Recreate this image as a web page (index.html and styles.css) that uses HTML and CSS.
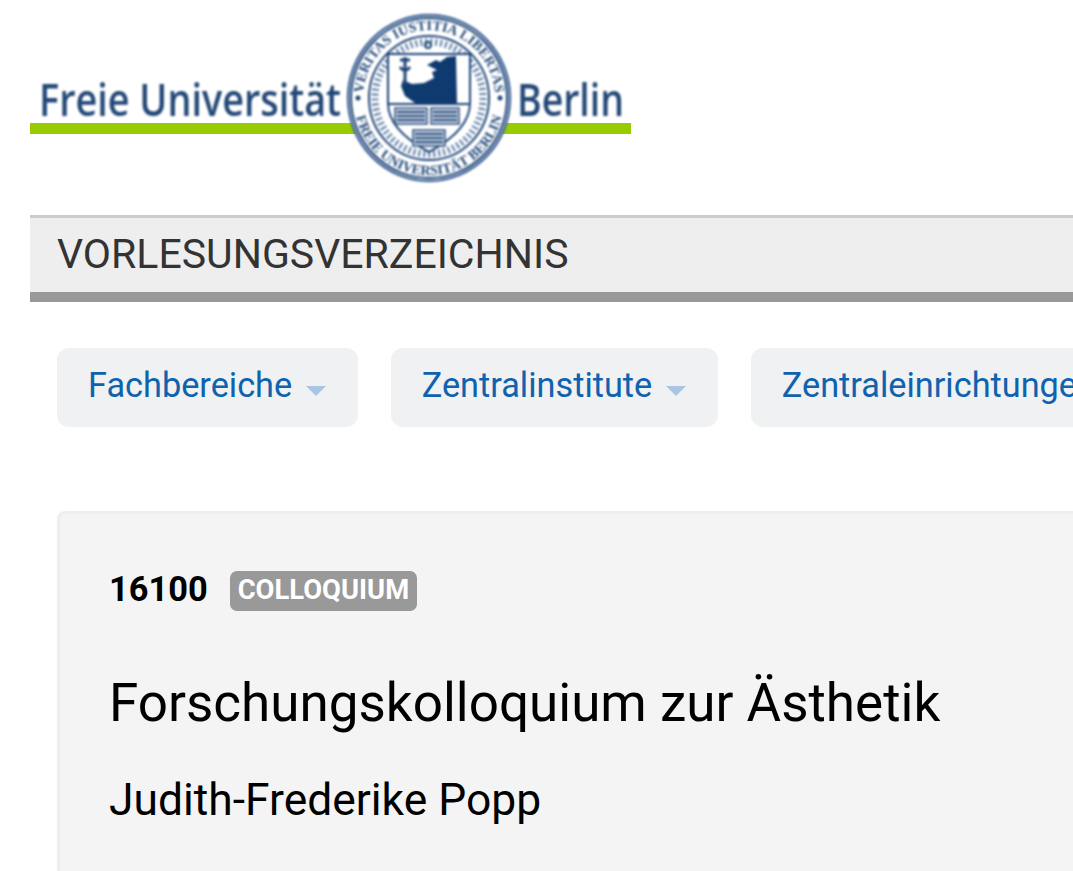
FILE: index.html
```html
<!DOCTYPE html>
<html lang="en">
<head>
  <meta charset="UTF-8">
  <meta name="viewport" content="width=device-width, initial-scale=1.0">
  <title>Vorlesungsverzeichnis</title>
  <link rel="stylesheet" href="styles.css">
</head>
<body>
  <header class="logo">
    <svg class="logo-img" viewBox="30 0 601 190" width="601" height="190">
      <defs>
        <path id="sealTop" d="M 363 98 A 66 68 0 0 1 495 98"/>
        <path id="sealBottom" d="M 354 98 A 75 77 0 0 0 504 98"/>
      </defs>
      <rect class="logo-bar" x="30" y="123" width="601" height="11"/>
      <text class="logo-text" x="39" y="116" textLength="302" lengthAdjust="spacingAndGlyphs">Freie Universität</text>
      <text class="logo-text" x="517" y="116" textLength="107" lengthAdjust="spacingAndGlyphs">Berlin</text>

      <!-- seal -->
      <g class="seal">
        <ellipse cx="429" cy="98" rx="81" ry="83" class="seal-bg"/>
        <ellipse cx="429" cy="98" rx="78" ry="80" class="seal-ring"/>
        <ellipse cx="429" cy="98" rx="60" ry="62" class="seal-ring"/>
        <ellipse cx="429" cy="98" rx="54" ry="56" class="seal-dash"/>
        <text class="seal-text"><textPath href="#sealTop" startOffset="50%">VERITAS IUSTITIA LIBERTAS</textPath></text>
        <text class="seal-text"><textPath href="#sealBottom" startOffset="50%">FREIE UNIVERSITÄT BERLIN</textPath></text>
        <circle cx="358" cy="98" r="2.5" class="seal-dot"/>
        <circle cx="500" cy="98" r="2.5" class="seal-dot"/>
        <circle cx="428" cy="45" r="3" class="seal-ring"/>

        <path class="seal-shield" d="M388 54H470V103Q470 130 429 152Q388 130 388 103Z"/>
        <path class="seal-bear" d="M427 65L436 60L440 62L447 57L456 56L457 105L415 103L405 96L401 86L403 80L412 84L424 83L434 78L432 72L437 70Z"/>
        <path class="seal-staff" d="M400 60H410M405 57V84M400 67Q405 74 410 67"/>
        <line x1="388" y1="104" x2="470" y2="104" class="seal-ring"/>
        <path class="seal-book" d="M395 108H427V124H395ZM431 108H459V124H431ZM413 130H445V146H413Z"/>
        <path class="seal-lines" d="M397 112H425M397 116H425M397 120H425M433 112H457M433 116H457M433 120H457M415 134H443M415 138H443M415 142H443"/>
      </g>
    </svg>
  </header>

  <div class="title-bar">VORLESUNGSVERZEICHNIS</div>

  <nav class="menu">
    <a class="menu-btn" href="#">Fachbereiche <span class="caret"></span></a>
    <a class="menu-btn" href="#">Zentralinstitute <span class="caret"></span></a>
    <a class="menu-btn" href="#">Zentraleinrichtungen <span class="caret"></span></a>
  </nav>

  <main class="course">
    <div class="course-head">
      <b class="course-nr">16100</b>
      <span class="badge">COLLOQUIUM</span>
    </div>
    <h1 class="course-title">Forschungskolloquium zur Ästhetik</h1>
    <p class="course-teacher">Judith-Frederike Popp</p>
  </main>
</body>
</html>
```

FILE: styles.css
```css
html, body {
  height: 871px;
  overflow: hidden;
}

body {
  font-family: Roboto, "Liberation Sans", sans-serif;
  margin: 0;
  padding: 0 0 0 30px;
  background-color: #fff;
  color: #000;
}

.logo {
  height: 215px;
}

.logo-img {
  display: block;
}

.logo-bar {
  fill: #97cd00;
}

.logo-text {
  font-family: "Open Sans", sans-serif;
  font-size: 46px;
  font-weight: 600;
  fill: #234877;
  filter: blur(0.8px);
}

.seal {
  filter: blur(0.9px);
}

.seal-bg {
  fill: #fff;
  stroke: #48699a;
  stroke-width: 2.5;
}

.seal-ring {
  fill: none;
  stroke: #1f4678;
  stroke-width: 2;
}

.seal-dash {
  fill: none;
  stroke: #5e7ea6;
  stroke-width: 7;
  stroke-dasharray: 2 3;
}

.seal-text {
  font-family: "Liberation Serif", serif;
  font-size: 14px;
  font-weight: bold;
  fill: #1f4678;
  text-anchor: middle;
}

.seal-dot {
  fill: #1f4678;
}

.seal-shield {
  fill: #fff;
  stroke: #1f4678;
  stroke-width: 2;
}

.seal-bear {
  fill: #0f3a70;
}

.seal-staff {
  fill: none;
  stroke: #1f4678;
  stroke-width: 3;
}

.seal-book {
  fill: #c5d1e0;
  stroke: #2c4f7f;
  stroke-width: 1.5;
}

.seal-lines {
  fill: none;
  stroke: #2c4f7f;
  stroke-width: 2;
}

.title-bar {
  width: 1100px;
  height: 74px;
  border-top: 3px solid #ccc;
  border-bottom: 10px solid #999;
  background-color: #eee;
  padding-left: 27px;
  font-size: 41px;
  line-height: 72px;
  color: #333;
}

.menu {
  display: flex;
  gap: 32.5px;
  width: 1400px;
  margin: 46px 0 0 27px;
}

.menu-btn {
  display: flex;
  align-items: center;
  gap: 14px;
  height: 73px;
  padding: 0 32px 6px 31px;
  border-radius: 12px;
  background-color: #f0f1f2;
  color: #0f62ae;
  font-size: 34.3px;
  text-decoration: none;
  white-space: nowrap;
}

.caret {
  width: 0;
  height: 0;
  margin-top: 12px;
  border-top: 10px solid #a9c6e3;
  border-left: 10.5px solid transparent;
  border-right: 10.5px solid transparent;
}

.course {
  width: 1300px;
  height: 400px;
  margin: 84px 0 0 27px;
  padding: 57px 0 0 49px;
  border: 3px solid #eee;
  border-radius: 8px;
  background-color: #f4f4f4;
}

.course-head {
  display: flex;
  align-items: center;
  gap: 22px;
  height: 40px;
}

.course-nr {
  font-size: 34.4px;
  margin-bottom: 5px;
}

.badge {
  padding: 0 8px;
  height: 40px;
  line-height: 38px;
  border-radius: 7px;
  background-color: #999;
  color: #fff;
  font-size: 27.4px;
  font-weight: bold;
}

.course-title {
  margin: 59px 0 0;
  font-size: 53px;
  font-weight: normal;
  line-height: 66px;
}

.course-teacher {
  margin: 39px 0 0;
  font-size: 44.4px;
  line-height: 50px;
}
```
